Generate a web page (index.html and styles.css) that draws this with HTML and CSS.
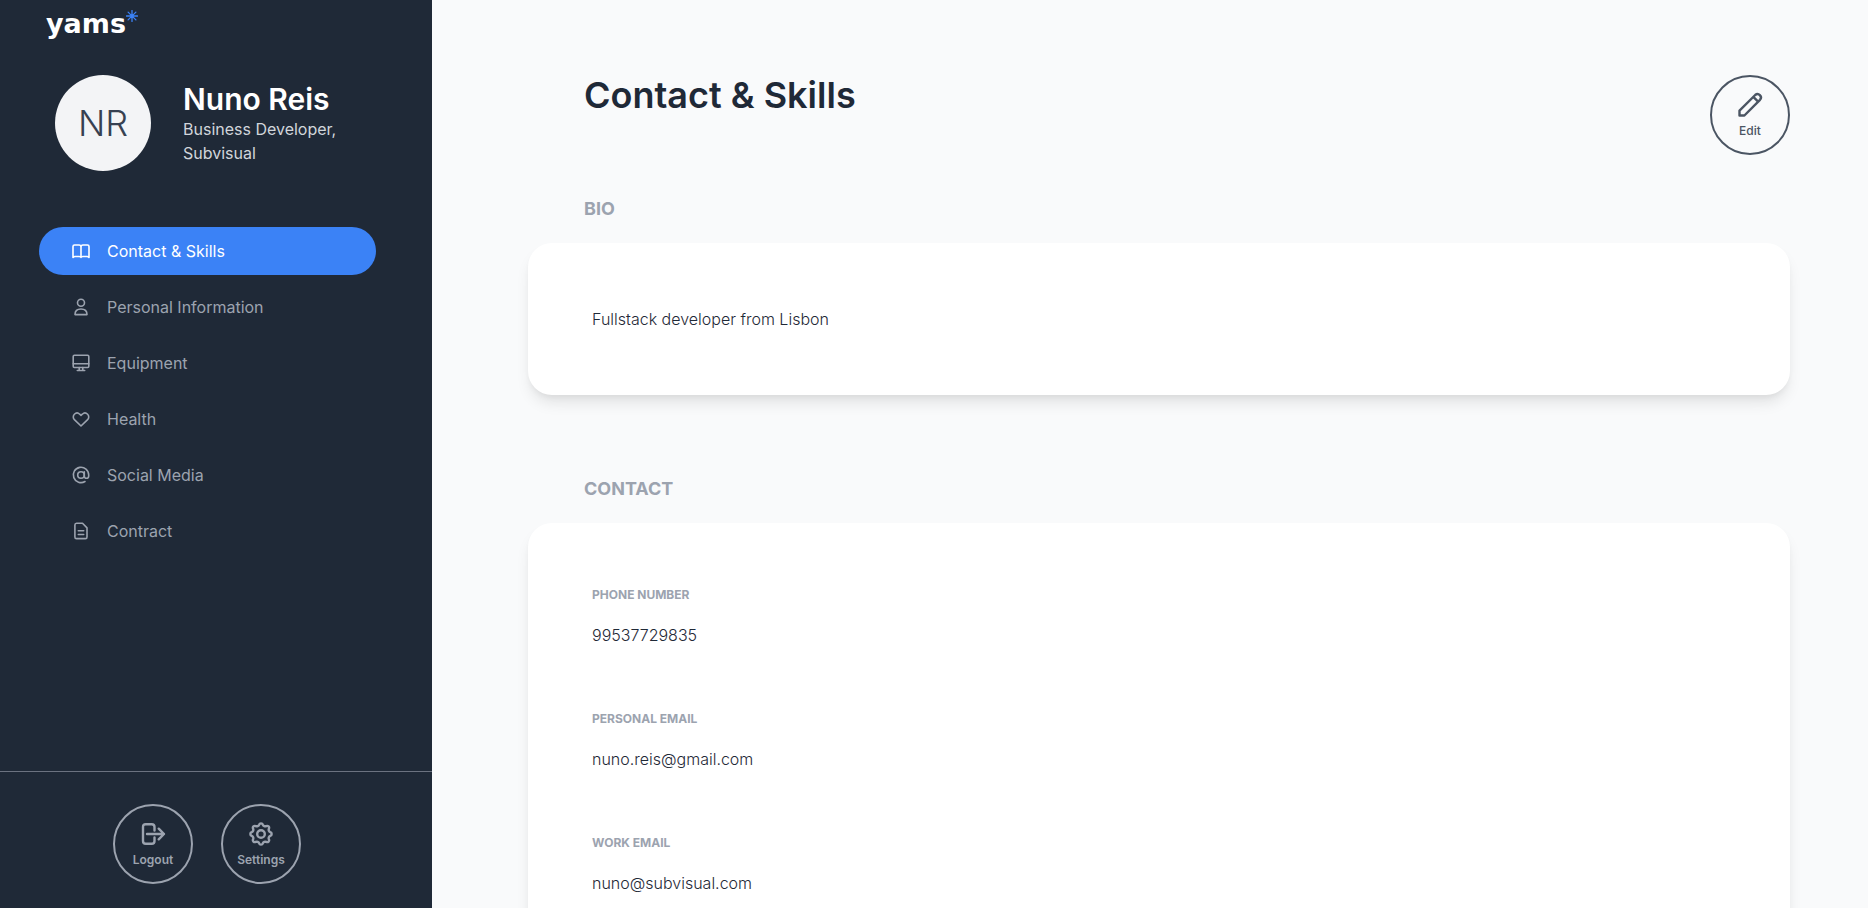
FILE: index.html
```html
<!DOCTYPE html>
<html lang="en">
<head>
<meta charset="utf-8">
<meta name="viewport" content="width=device-width, initial-scale=1">
<title>Contact &amp; Skills - yams</title>
<link rel="stylesheet" href="styles.css">
</head>
<body>
<div class="app">
  <aside class="sidebar">
    <a class="logo" href="#">yams<svg class="logo-star" viewBox="0 0 12 12" aria-hidden="true"><path d="M6 .5v11M.5 6h11M2.1 2.1l7.8 7.8M9.9 2.1L2.1 9.9"/></svg></a>
    <div class="profile">
      <div class="avatar">NR</div>
      <div class="profile-text">
        <div class="profile-name">Nuno Reis</div>
        <div class="profile-role">Business Developer, Subvisual</div>
      </div>
    </div>
    <nav class="nav">
      <a class="nav-item nav-item-active" href="#"><svg class="nav-icon" viewBox="0 0 20 20" aria-hidden="true"><path d="M10 5.8C10 4.6 9.2 4 8 4H3.5C2.5 4 2 4.6 2 5.5v11c.5-.7 1.2-1 2-1h4.2c1 0 1.8.4 1.8 1V5.8C10 4.6 10.8 4 12 4h4.5c1 0 1.5.6 1.5 1.5v11c-.5-.7-1.2-1-2-1h-4.2c-1 0-1.8.4-1.8 1"/></svg>Contact &amp; Skills</a>
      <a class="nav-item" href="#"><svg class="nav-icon" viewBox="0 0 20 20" aria-hidden="true"><circle cx="10" cy="5.8" r="3.5"/><path d="M4 17.6c0-3.4 2.2-5.6 6-5.6s6 2.2 6 5.6z"/></svg>Personal Information</a>
      <a class="nav-item" href="#"><svg class="nav-icon" viewBox="0 0 20 20" aria-hidden="true"><rect x="2.2" y="2.2" width="15.6" height="12.3" rx="1.2"/><path d="M2.2 10.8h15.6M8.2 14.5v3M11.8 14.5v3M6.3 17.5h7.4"/></svg>Equipment</a>
      <a class="nav-item" href="#"><svg class="nav-icon" viewBox="0 0 20 20" aria-hidden="true"><path d="M10 17l-6.600-6.400C1.900 9.100 1.900 6.700 3.400 5.200s3.800-1.500 5.300 0L10 6.400l1.300-1.200c1.500-1.500 3.800-1.500 5.300 0s1.500 3.900 0 5.400z"/></svg>Health</a>
      <a class="nav-item" href="#"><svg class="nav-icon" viewBox="0 0 20 20" aria-hidden="true"><circle cx="10" cy="10" r="3.300"/><path d="M13.300 6.700v4.200c0 1.400.9 2.300 2.200 2.300s2.200-.9 2.200-2.300V10a7.700 7.700 0 1 0-3.700 6.500"/></svg>Social Media</a>
      <a class="nav-item" href="#"><svg class="nav-icon" viewBox="0 0 20 20" aria-hidden="true"><path d="M5.500 2.200h6L16 6.900v9c0 1-.6 1.700-1.600 1.700H5.500c-1 0-1.600-.7-1.600-1.700v-12c0-1 .6-1.700 1.600-1.700zM7.300 9.800h5.400M7.300 13.500h5.400"/></svg>Contract</a>
    </nav>
    <div class="sidebar-footer">
      <button class="round-button round-button-light" type="button"><svg class="round-icon" viewBox="0 0 24 24" aria-hidden="true"><path d="M13.500 8.500V5c0-1.700-1-2.700-2.700-2.700H4.700C3 2.300 2 3.300 2 5v14c0 1.700 1 2.700 2.700 2.700h6.100c1.700 0 2.700-1 2.700-2.700v-3.500M6 12h17M17.700 6.700L23 12l-5.300 5.300"/></svg>Logout</button>
      <button class="round-button round-button-light" type="button"><svg class="round-icon" viewBox="0 0 24 24" aria-hidden="true"><path d="M21.320 10.150A1.950 1.950 0 0 1 21.320 13.850A2.600 2.600 0 0 0 19.900 17.280A1.950 1.950 0 0 1 17.280 19.900A2.600 2.600 0 0 0 13.850 21.320A1.950 1.950 0 0 1 10.150 21.320A2.600 2.600 0 0 0 6.720 19.900A1.950 1.950 0 0 1 4.100 17.280A2.600 2.600 0 0 0 2.680 13.850A1.950 1.950 0 0 1 2.680 10.150A2.600 2.600 0 0 0 4.100 6.720A1.950 1.950 0 0 1 6.720 4.100A2.600 2.600 0 0 0 10.150 2.680A1.950 1.950 0 0 1 13.850 2.680A2.600 2.600 0 0 0 17.280 4.100A1.950 1.950 0 0 1 19.900 6.720A2.600 2.600 0 0 0 21.320 10.150Z"/><circle cx="12" cy="12" r="3.800"/></svg>Settings</button>
    </div>
  </aside>
  <main class="main">
    <header class="page-header">
      <h1 class="page-title">Contact &amp; Skills</h1>
      <button class="round-button" type="button"><svg class="round-icon" viewBox="0 0 24 24" aria-hidden="true"><path d="M1.500 22.500v-4.900L17.200 2a3.400 3.400 0 0 1 4.800 4.800L6.400 22.500zM15.300 3.900l4.800 4.800"/></svg>Edit</button>
    </header>
    <section class="section">
      <h2 class="section-title">Bio</h2>
      <div class="card">
        <p class="value">Fullstack developer from Lisbon</p>
      </div>
    </section>
    <section class="section">
      <h2 class="section-title">Contact</h2>
      <dl class="card">
        <div class="field"><dt class="label">Phone number</dt><dd class="value">99537729835</dd></div>
        <div class="field"><dt class="label">Personal email</dt><dd class="value">nuno.reis@gmail.com</dd></div>
        <div class="field"><dt class="label">Work email</dt><dd class="value">nuno@subvisual.com</dd></div>
      </dl>
    </section>
  </main>
</div>
</body>
</html>
```
FILE: styles.css
```css
* { box-sizing: border-box; }

html { scrollbar-width: none; }

body {
  margin: 0;
  font-family: Inter, "Liberation Sans", sans-serif;
  font-size: 16px;
  line-height: 24px;
  color: #1f2937;
  background: #f9fafb;
}

h1, h2, p, dl, dd { margin: 0; }

svg {
  fill: none;
  stroke: currentColor;
  stroke-linecap: round;
  stroke-linejoin: round;
}

.app {
  display: flex;
  align-items: flex-start;
  min-height: 100vh;
}

.sidebar {
  position: sticky;
  top: 0;
  flex: 0 0 432px;
  height: 100vh;
  display: flex;
  flex-direction: column;
  background: #1f2937;
}

.logo {
  display: flex;
  align-self: flex-start;
  margin: 10px 0 0 46px;
  font-family: "DejaVu Sans", sans-serif;
  font-size: 27px;
  font-weight: 700;
  line-height: 28px;
  color: #fff;
  text-decoration: none;
}

.logo-star {
  width: 12px;
  height: 12px;
  color: #3b82f6;
  stroke-width: 1.3;
}

.profile {
  display: flex;
  align-items: center;
  gap: 32px;
  margin: 37px 56px 0 55px;
}

.avatar {
  flex: none;
  display: flex;
  align-items: center;
  justify-content: center;
  width: 96px;
  height: 96px;
  border-radius: 50%;
  background: #f3f4f6;
  color: #374151;
  font-size: 36px;
  font-weight: 300;
}

.profile-name {
  font-size: 30px;
  font-weight: 600;
  line-height: 36px;
  color: #fff;
}

.profile-role { color: #d1d5db; }

.nav {
  display: flex;
  flex-direction: column;
  gap: 8px;
  margin: 56px 56px 0 39px;
}

.nav-item {
  display: flex;
  align-items: center;
  gap: 16px;
  height: 48px;
  padding: 0 32px;
  border-radius: 24px;
  color: #9ca3af;
  text-decoration: none;
}

.nav-item-active {
  background: #3b82f6;
  color: #fff;
}

.nav-icon {
  width: 20px;
  height: 20px;
  stroke-width: 1.6;
}

.sidebar-footer {
  display: flex;
  justify-content: center;
  gap: 28px;
  margin-top: auto;
  padding: 32px 18px 24px 0;
  border-top: 1px solid #6b7280;
}

.round-button {
  flex: none;
  display: flex;
  flex-direction: column;
  align-items: center;
  justify-content: center;
  gap: 6px;
  width: 80px;
  height: 80px;
  padding: 2px 0 0;
  border: 2px solid currentColor;
  border-radius: 50%;
  background: none;
  color: #4b5563;
  font: 500 12px/16px Inter, sans-serif;
}

.round-button-light {
  color: #9ca3af;
  font-weight: 600;
}

.round-icon {
  width: 24px;
  height: 24px;
  stroke-width: 2.4;
  overflow: visible;
}

.main {
  flex: 1;
  min-width: 0;
  padding: 75px 78px 80px 96px;
}

.page-header {
  display: flex;
  justify-content: space-between;
  align-items: flex-start;
  padding-left: 56px;
}

.page-title {
  font-size: 36px;
  font-weight: 600;
  line-height: 40px;
}

.section { padding-top: 40px; }

.section + .section { padding-top: 80px; }

.section-title {
  margin: 0 56px 20px;
  font-size: 18px;
  font-weight: 700;
  line-height: 28px;
  text-transform: uppercase;
  color: #9ca3af;
}

.card {
  display: flex;
  flex-direction: column;
  gap: 64px;
  padding: 64px;
  border-radius: 24px;
  background: #fff;
  box-shadow: 0 10px 15px -3px rgba(0, 0, 0, .1), 0 4px 6px -2px rgba(0, 0, 0, .05);
}

.field {
  display: flex;
  flex-direction: column;
  gap: 20px;
}

.label {
  font-size: 12px;
  font-weight: 700;
  line-height: 16px;
  text-transform: uppercase;
  color: #9ca3af;
}

.value { font-weight: 300; }
```
